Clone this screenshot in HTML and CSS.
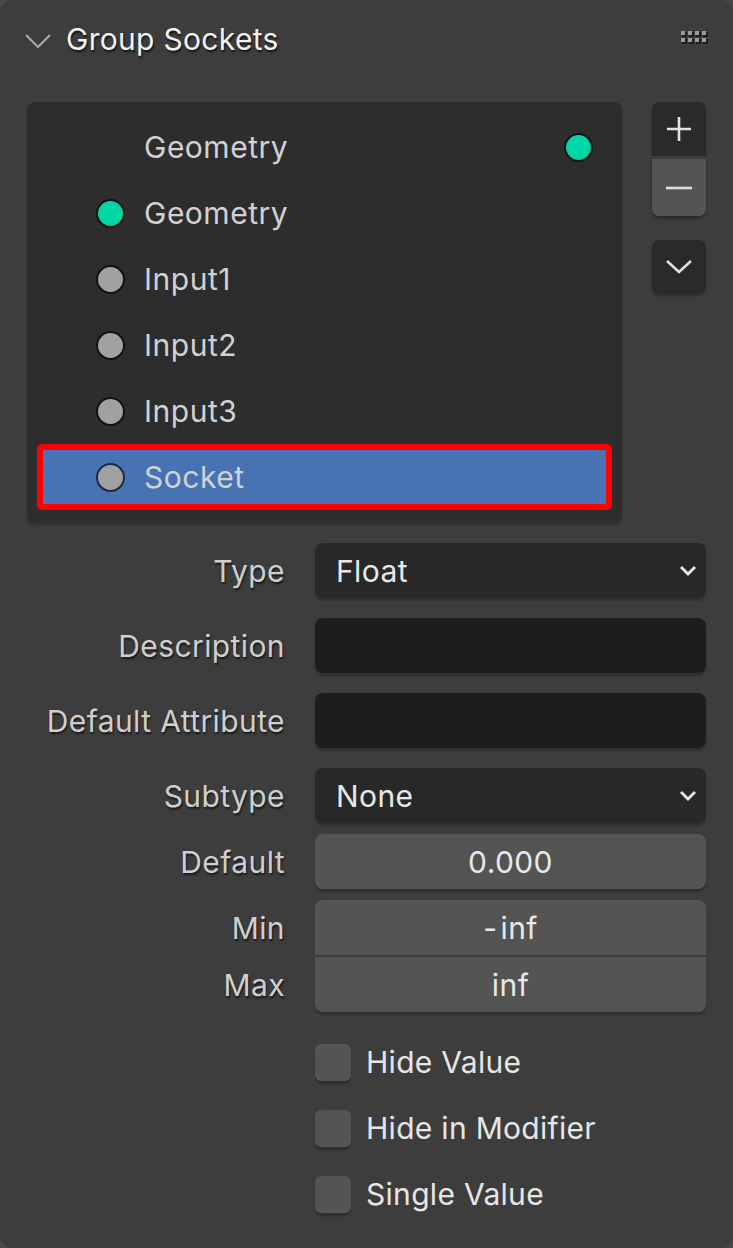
FILE: index.html
```html
<!DOCTYPE html>
<html>
<head>
<meta charset="utf-8">
<link rel="stylesheet" href="styles.css">
</head>
<body>
<div class="panel">
  <header class="hdr">
    <svg class="hdr-chev" width="28" height="16" viewBox="0 0 28 16"><path d="M2 2 L14 14 L26 2" fill="none" stroke="#a8a8a8" stroke-width="2.2"/></svg>
    <span class="hdr-title">Group Sockets</span>
    <svg class="grip" width="32" height="16" viewBox="0 0 32 16">
      <g fill="#1e1e1e">
        <rect x="3" y="2" width="5" height="5"/><rect x="10" y="2" width="5" height="5"/><rect x="17" y="2" width="5" height="5"/><rect x="24" y="2" width="5" height="5"/>
        <rect x="3" y="9" width="5" height="5"/><rect x="10" y="9" width="5" height="5"/><rect x="17" y="9" width="5" height="5"/><rect x="24" y="9" width="5" height="5"/>
      </g>
      <g fill="#9a9a9a">
        <rect x="2" y="1" width="4" height="4"/><rect x="9" y="1" width="4" height="4"/><rect x="16" y="1" width="4" height="4"/><rect x="23" y="1" width="4" height="4"/>
        <rect x="2" y="8" width="4" height="4"/><rect x="9" y="8" width="4" height="4"/><rect x="16" y="8" width="4" height="4"/><rect x="23" y="8" width="4" height="4"/>
      </g>
    </svg>
  </header>

  <div class="list-area">
    <div class="list">
      <div class="row row-out"><span class="lbl">Geometry</span><span class="dot geo"></span></div>
      <div class="row"><span class="dot geo"></span><span class="lbl">Geometry</span></div>
      <div class="row"><span class="dot flt"></span><span class="lbl">Input1</span></div>
      <div class="row"><span class="dot flt"></span><span class="lbl">Input2</span></div>
      <div class="row"><span class="dot flt"></span><span class="lbl">Input3</span></div>
      <div class="row sel"><span class="dot flt seldot"></span><span class="lbl">Socket</span></div>
    </div>
    <div class="side">
      <div class="btn-group">
        <div class="sbtn plus">
          <svg width="28" height="28" viewBox="0 0 28 28"><path d="M14 2 V26 M2 14 H26" stroke="#e4e4e4" stroke-width="2.6" fill="none"/></svg>
        </div>
        <div class="sbtn minus">
          <svg width="28" height="28" viewBox="0 0 28 28"><path d="M1 14 H27" stroke="#dedede" stroke-width="2.6" fill="none"/></svg>
        </div>
      </div>
      <div class="sbtn chevbtn">
        <svg width="28" height="16" viewBox="0 0 28 16"><path d="M2 2 L14 13 L26 2" fill="none" stroke="#e0e0e0" stroke-width="2.6"/></svg>
      </div>
    </div>
  </div>

  <div class="props">
    <div class="prop">
      <span class="plabel">Type</span>
      <div class="field dd"><span>Float</span><svg class="ddchev" width="18" height="11" viewBox="0 0 18 11"><path d="M2 2 L9 9 L16 2" fill="none" stroke="#eeeeee" stroke-width="2.8"/></svg></div>
    </div>
    <div class="prop r-gap20">
      <span class="plabel">Description</span>
      <div class="field txt"></div>
    </div>
    <div class="prop r-gap20">
      <span class="plabel">Default Attribute</span>
      <div class="field txt"></div>
    </div>
    <div class="prop r-gap20">
      <span class="plabel">Subtype</span>
      <div class="field dd"><span>None</span><svg class="ddchev" width="18" height="11" viewBox="0 0 18 11"><path d="M2 2 L9 9 L16 2" fill="none" stroke="#eeeeee" stroke-width="2.8"/></svg></div>
    </div>
    <div class="prop r-gap11">
      <span class="plabel">Default</span>
      <div class="field num">0.000</div>
    </div>
    <div class="prop r-gap11">
      <span class="plabel">Min</span>
      <div class="field num top">-&#8202;inf</div>
    </div>
    <div class="prop r-gap2">
      <span class="plabel">Max</span>
      <div class="field num bot">inf</div>
    </div>
    <div class="checks">
      <label class="chk"><span class="box"></span><span>Hide Value</span></label>
      <label class="chk"><span class="box"></span><span>Hide in Modifier</span></label>
      <label class="chk"><span class="box"></span><span>Single Value</span></label>
    </div>
  </div>
</div>
</body>
</html>
```

FILE: styles.css
```css
* { box-sizing: border-box; }
html, body { margin: 0; padding: 0; background: #474747; }
body {
  width: 733px;
  height: 1248px;
  font-family: Inter, "Noto Sans", "DejaVu Sans", sans-serif;
  overflow: hidden;
}
.panel {
  width: 733px;
  height: 1248px;
  background: #3d3d3d;
  border-radius: 12px;
}
.hdr {
  height: 80px;
  display: flex;
  align-items: center;
  padding-left: 24px;
  padding-right: 22px;
}
.hdr-chev { margin-top: 2px; }
.hdr-title {
  margin-left: 14px;
  margin-top: -3px;
  font-size: 30px;
  letter-spacing: 0.3px;
  color: #f2f2f2;
  text-shadow: 1px 2px 2px rgba(0,0,0,0.7);
}
.grip { margin-left: auto; margin-top: -4px; }

.list-area {
  display: flex;
  margin-top: 22px;
  padding-left: 27px;
  gap: 30px;
}
.list {
  width: 595px;
  height: 420px;
  background: #2d2d2d;
  border-radius: 8px;
  padding: 12px 10px;
  box-shadow: 0 3px 2px rgba(0,0,0,0.22);
}
.row {
  height: 66px;
  display: flex;
  align-items: center;
  padding-left: 59px;
  font-size: 30px;
  letter-spacing: 0.5px;
  color: #d2d2d2;
}
.row .lbl { margin-left: 19px; }
.row-out { padding-left: 107px; padding-right: 19px; }
.row-out .lbl { margin-left: 0; }
.row-out .dot { margin-left: auto; }
.dot {
  width: 29px;
  height: 29px;
  border-radius: 50%;
  border: 2.5px solid #121212;
  flex: none;
}
.geo { background: #00d6a3; }
.flt { background: #a1a1a1; }
.sel {
  background: #4772b3;
  border: 6px solid #ff0000;
  border-radius: 5px;
  padding-left: 53px;
}
.seldot { border-color: #1b2a45; }

.side { display: flex; flex-direction: column; width: 54px; }
.btn-group {
  display: flex;
  flex-direction: column;
  gap: 3px;
  box-shadow: 0 3px 2px rgba(0,0,0,0.25);
  border-radius: 7px;
}
.sbtn {
  width: 54px;
  display: flex;
  align-items: center;
  justify-content: center;
}
.plus { height: 54px; background: #2a2a2a; border-radius: 7px 7px 0 0; }
.minus { height: 57px; background: #545454; border-radius: 0 0 7px 7px; }
.chevbtn {
  margin-top: 24px;
  height: 53px;
  background: #2a2a2a;
  border-radius: 7px;
  box-shadow: 0 3px 2px rgba(0,0,0,0.25);
}

.props { margin-top: 21px; }
.prop {
  display: flex;
  align-items: center;
  height: 55px;
}
.r-gap20 { margin-top: 20px; }
.r-gap11 { margin-top: 11px; }
.r-gap2 { margin-top: 2px; }
.plabel {
  width: 285px;
  text-align: right;
  font-size: 30px;
  letter-spacing: 0.4px;
  color: #cfcfcf;
  text-shadow: 1px 2px 2px rgba(0,0,0,0.6);
  flex: none;
}
.field {
  margin-left: 30px;
  width: 391px;
  height: 55px;
  border-radius: 8px;
  font-size: 30px;
  letter-spacing: 0.4px;
  color: #e8e8e8;
  display: flex;
  align-items: center;
  box-shadow: 0 3px 2px rgba(0,0,0,0.22);
}
.dd { background: #282828; padding-left: 21px; padding-right: 9px; }
.dd .ddchev { margin-left: auto; }
.txt { background: #1d1d1d; }
.num { background: #545454; justify-content: center; }
.num.top { border-radius: 8px 8px 0 0; box-shadow: none; }
.num.bot { border-radius: 0 0 8px 8px; }

.checks { margin-top: 17px; margin-left: 315px; }
.chk {
  height: 66px;
  display: flex;
  align-items: center;
  font-size: 30px;
  letter-spacing: 0.3px;
  color: #e6e6e6;
}
.box {
  width: 36px;
  height: 37px;
  border-radius: 6px;
  background: #545454;
  box-shadow: 0 3px 2px rgba(0,0,0,0.25);
  margin-right: 15px;
  flex: none;
}
```
